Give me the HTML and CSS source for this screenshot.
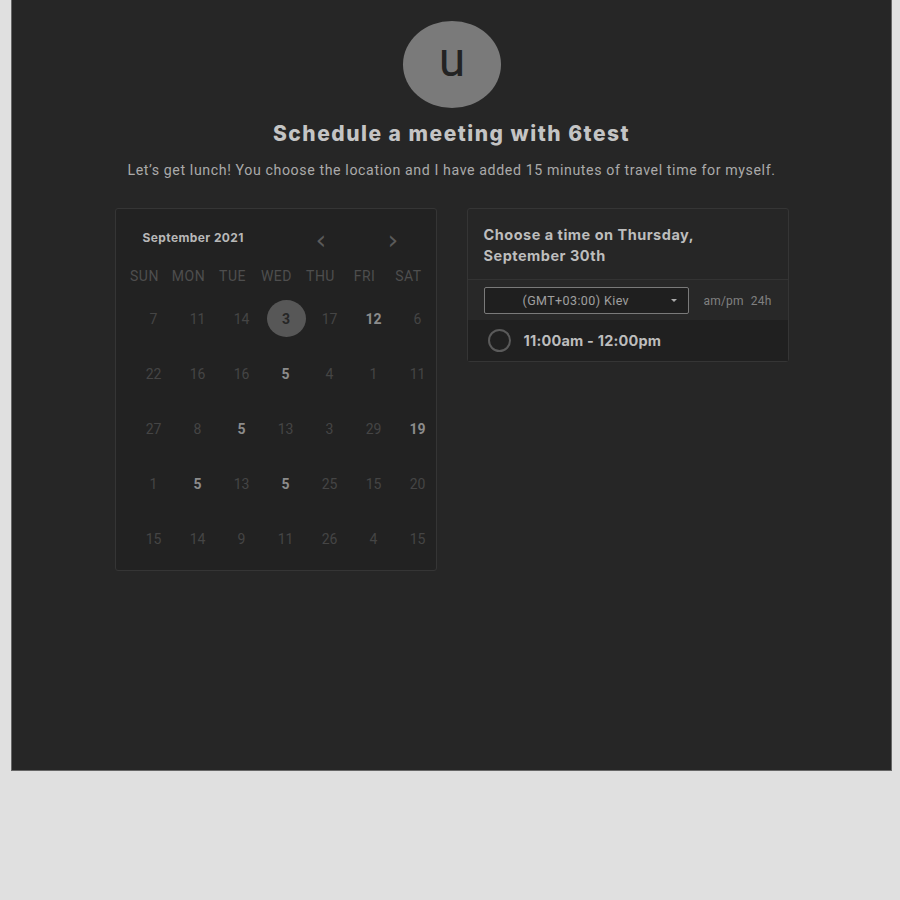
FILE: index.html
```html
<!DOCTYPE html>
<html>
<head>
<meta charset="utf-8">
<link rel="stylesheet" href="styles.css">
</head>
<body>
<div class="panel">
  <div class="avatar"><span>u</span></div>
  <h1 class="title">Schedule a meeting with 6test</h1>
  <p class="desc">Let’s get lunch! You choose the location and I have added 15 minutes of travel time for myself.</p>
  <div class="cards">
    <div class="card cal">
      <div class="cal-head">
        <span class="month">September 2021</span>
        <span class="arrow prev">&lsaquo;</span>
        <span class="arrow next">&rsaquo;</span>
      </div>
      <div class="weekdays">
        <span>SUN</span><span>MON</span><span>TUE</span><span>WED</span><span>THU</span><span>FRI</span><span>SAT</span>
      </div>
      <div class="days">
        <span>7</span><span>11</span><span>14</span><span class="sel"><i>3</i></span><span>17</span><span class="on">12</span><span>6</span>
        <span>22</span><span>16</span><span>16</span><span class="on">5</span><span>4</span><span>1</span><span>11</span>
        <span>27</span><span>8</span><span class="on">5</span><span>13</span><span>3</span><span>29</span><span class="on">19</span>
        <span>1</span><span class="on">5</span><span>13</span><span class="on">5</span><span>25</span><span>15</span><span>20</span>
        <span>15</span><span>14</span><span>9</span><span>11</span><span>26</span><span>4</span><span>15</span>
      </div>
    </div>
    <div class="card times">
      <div class="times-head">Choose a time on Thursday, September 30th</div>
      <div class="tz-row">
        <div class="tz-select"><span>(GMT+03:00) Kiev</span><span class="caret"></span></div>
        <div class="fmt"><span>am/pm</span><span>24h</span></div>
      </div>
      <div class="slot">
        <span class="radio"></span>
        <span class="slot-text">11:00am - 12:00pm</span>
      </div>
    </div>
  </div>
</div>
</body>
</html>
```
FILE: styles.css
```css
* { box-sizing: border-box; }
html, body { margin: 0; padding: 0; background: #e0e0e0; }
body { font-family: Inter, "Liberation Sans", sans-serif; }
.panel {
  margin-left: 11px;
  width: 881px;
  height: 771px;
  background: #262626;
  border: 1px solid #666;
  border-top: none;
  display: flex;
  flex-direction: column;
  align-items: center;
  padding-top: 21px;
}
.avatar {
  width: 98px;
  height: 87px;
  border-radius: 50%;
  background: #7a7a7a;
  display: flex;
  align-items: center;
  justify-content: center;
  margin-left: 1px;
}
.avatar span {
  font-family: Roboto, sans-serif;
  font-size: 48px;
  color: #232323;
  line-height: 1;
  margin-top: -9px;
}
.title {
  margin: 13px 0 0;
  font-size: 21px;
  font-weight: 800;
  letter-spacing: 1.5px;
  color: #c4c4c4;
  line-height: 26px;
}
.desc {
  margin: 13px 0 0;
  font-family: Roboto, sans-serif;
  font-size: 14.2px;
  letter-spacing: 0.6px;
  color: #aaaaaa;
  line-height: 20px;
}
.cards {
  display: flex;
  gap: 30px;
  margin-top: 28px;
  align-items: flex-start;
}
.card {
  width: 322px;
  border: 1px solid #353535;
  border-radius: 3px;
}
.cal {
  background: #222222;
  height: 363px;
  padding: 0 0 0 7px;
}
.cal-head {
  display: flex;
  align-items: center;
  height: 56px;
  padding-top: 1px;
  padding-left: 20px;
}
.month {
  font-size: 12px;
  font-weight: 700;
  letter-spacing: 0.4px;
  color: #b8b8b8;
  width: 173px;
}
.arrow {
  font-family: "DejaVu Sans", sans-serif;
  font-size: 27px;
  color: #5a5a5a;
  line-height: 1;
  margin-top: 4px;
}
.prev { width: 72px; }
.weekdays {
  display: grid;
  grid-template-columns: repeat(7, 44px);
  height: 24px;
  align-items: center;
  font-family: Roboto, sans-serif;
  font-size: 14px;
  letter-spacing: 0.5px;
  color: #4e4e4e;
  text-align: center;
  margin-top: -1px;
}
.days {
  display: grid;
  grid-template-columns: repeat(7, 44px);
  grid-auto-rows: 55px;
  margin-left: 9px;
  margin-top: 3px;
  font-family: Roboto, sans-serif;
  font-size: 14px;
  color: #454545;
  text-align: center;
}
.days span {
  display: flex;
  align-items: center;
  justify-content: center;
}
.days .on { color: #8c8c8c; font-weight: 700; }
.days .sel i {
  font-style: normal;
  width: 39px;
  height: 37px;
  border-radius: 50%;
  background: #575757;
  color: #262626;
  font-weight: 700;
  display: flex;
  align-items: center;
  justify-content: center;
  margin-left: 1px;
}
.times { background: #262626; }
.times-head {
  padding: 15px 16px 13px;
  font-size: 14.5px;
  font-weight: 700;
  letter-spacing: 0.5px;
  line-height: 21px;
  color: #bdbdbd;
  border-bottom: 1px solid #333;
  padding-right: 60px;
}
.tz-row {
  display: flex;
  align-items: center;
  padding: 7px 16px 6px;
  gap: 15px;
  background: #282828;
}
.tz-select {
  width: 205px;
  height: 27px;
  border: 1px solid #7a7a7a;
  border-radius: 2px;
  background: #1f1f1f;
  display: flex;
  align-items: center;
  font-family: Roboto, sans-serif;
  font-size: 12.5px;
  letter-spacing: 0.4px;
  color: #a0a0a0;
  padding-left: 38px;
}
.tz-select span:first-child { flex: 1; }
.caret {
  width: 0;
  height: 0;
  border-left: 3px solid transparent;
  border-right: 3px solid transparent;
  border-top: 3px solid #aaa;
  margin-right: 11px;
}
.fmt {
  display: flex;
  gap: 7px;
  font-family: Roboto, sans-serif;
  font-size: 12px;
  letter-spacing: 0.2px;
  color: #808080;
}
.slot {
  display: flex;
  align-items: center;
  height: 41px;
  background: #202020;
  padding-left: 20px;
}
.radio {
  width: 23px;
  height: 23px;
  border: 2px solid #5a5a5a;
  border-radius: 50%;
}
.slot-text {
  margin-left: 13px;
  font-size: 14.5px;
  font-weight: 700;
  letter-spacing: 0.2px;
  color: #bdbdbd;
}
```
